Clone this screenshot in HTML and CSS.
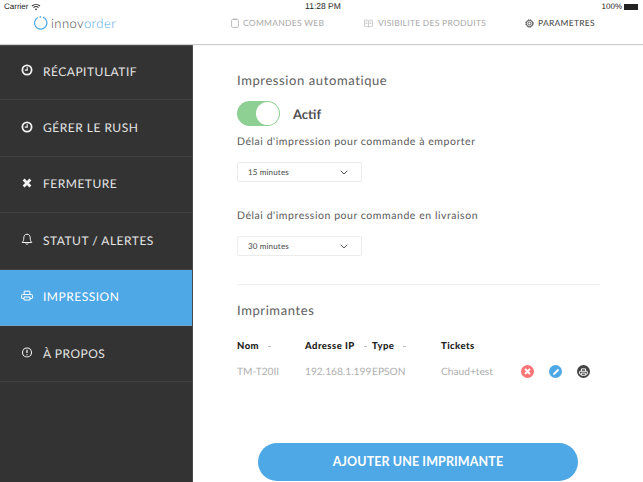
FILE: index.html
```html
<!DOCTYPE html>
<html lang="fr">
<head>
<meta charset="utf-8">
<title>Innovorder</title>
<link rel="stylesheet" href="styles.css">
</head>
<body>
<div class="app">
  <header class="header">
    <div class="status">
      <div class="status-left">Carrier
        <svg class="wifi" width="10" height="8" viewBox="0 0 10 8"><path d="M1 3a6 6 0 0 1 8 0M2.500 4.600a3.800 3.800 0 0 1 5 0" fill="none" stroke="#333" stroke-width="1.100"/><path d="M3.800 6a1.800 1.800 0 0 1 2.400 0L5 7.400z" fill="#333"/></svg>
      </div>
      <div class="status-time">11:28 PM</div>
      <div class="status-right">100%<span class="battery"></span></div>
    </div>
    <div class="topbar">
      <div class="logo">
        <svg class="logo-mark" width="15" height="16" viewBox="0 0 16 16"><path d="M5 2.200a6.600 6.600 0 1 0 5.600-.4" fill="none" stroke="#4fa8e6" stroke-width="1.300"/><circle cx="7.800" cy="1.500" r=".9" fill="#4fa8e6"/></svg>
        <span class="logo-text">innov<span class="logo-accent">order</span></span>
      </div>
      <nav class="tabs">
        <div class="tab tab-web">
          <svg width="8" height="10" viewBox="0 0 8 10"><rect x=".6" y="1.400" width="6.800" height="8" rx="1" fill="none" stroke="#bbb"/><rect x="2.200" y=".5" width="3.600" height="1.600" fill="#bbb"/></svg>
          <span>COMMANDES WEB</span></div>
        <div class="tab tab-vis">
          <svg width="9" height="9" viewBox="0 0 10 10"><path d="M5 2C4 1 2 1 .6 1.400v7C2 8 4 8 5 9c1-1 3-1 4.400-.6v-7C8 1 6 1 5 2zM5 2v7M1.800 3.400h2M1.800 5h2M6.200 3.400h2M6.200 5h2" fill="none" stroke="#bbb" stroke-width=".8"/></svg>
          <span>VISIBILITE DES PRODUITS</span></div>
        <div class="tab tab-active">
          <svg width="9" height="9" viewBox="0 0 10 10"><circle cx="5" cy="5" r="1.600" fill="none" stroke="#444" stroke-width=".9"/><circle cx="5" cy="5" r="3.500" fill="none" stroke="#444" stroke-width="1"/><circle cx="5" cy="5" r="4.200" fill="none" stroke="#444" stroke-width="1.100" stroke-dasharray="1.100 1.100"/></svg>
          <span>PARAMETRES</span></div>
      </nav>
    </div>
  </header>
  <div class="main">
    <aside class="sidebar">
      <div class="item">
        <svg class="ico" width="12" height="12" viewBox="0 0 12 12"><circle cx="6" cy="6" r="4.600" fill="none" stroke="#f2f2f2" stroke-width="1.800"/><path d="M6.200 3.200v3H3.800" fill="none" stroke="#f2f2f2" stroke-width="1.200"/></svg>
        <span>RÉCAPITULATIF</span></div>
      <div class="item">
        <svg class="ico" width="12" height="12" viewBox="0 0 12 12"><circle cx="6" cy="6" r="4.600" fill="none" stroke="#f2f2f2" stroke-width="1.800"/><path d="M6.200 3.200v3H3.800" fill="none" stroke="#f2f2f2" stroke-width="1.200"/></svg>
        <span>GÉRER LE RUSH</span></div>
      <div class="item">
        <svg class="ico" width="12" height="12" viewBox="0 0 12 12"><path d="M2.600 2.600l6.800 6.800M9.400 2.600l-6.800 6.800" fill="none" stroke="#f4f4f4" stroke-width="2.800"/></svg>
        <span>FERMETURE</span></div>
      <div class="item">
        <svg class="ico" width="12" height="13" viewBox="0 0 12 13"><path d="M6 1.200c-2 0-3.200 1.500-3.200 3.500 0 2.500-.6 3.600-1.600 4.800h9.600c-1-1.200-1.600-2.300-1.600-4.800 0-2-1.200-3.500-3.200-3.500zM4.800 10.500a1.300 1.300 0 0 0 2.400 0" fill="none" stroke="#f2f2f2"/></svg>
        <span>STATUT / ALERTES</span></div>
      <div class="item item-active">
        <svg class="ico" width="12" height="11" viewBox="0 0 12 11"><path d="M3.200 4.500V1.200h5.600v3.300M3 8.500H1.200c-.4 0-.6-.3-.6-.6V5.300c0-.5.3-.8.800-.8h9.200c.5 0 .8.300.8.800v2.600c0 .3-.2.600-.6.600H9M3 7h6v3H3z" fill="none" stroke="#fff" stroke-width="1"/></svg>
        <span>IMPRESSION</span></div>
      <div class="item">
        <svg class="ico" width="11" height="11" viewBox="0 0 11 11"><circle cx="5.500" cy="5.500" r="4.500" fill="none" stroke="#f2f2f2" stroke-width="1.100"/><path d="M5.500 2.800v3.200M5.500 7.200v1.100" stroke="#f2f2f2" stroke-width="1.300"/></svg>
        <span>À PROPOS</span></div>
    </aside>
    <main class="content">
      <h2 class="title">Impression automatique</h2>
      <div class="toggle-row">
        <div class="toggle"><div class="knob"></div></div>
        <span class="toggle-label">Actif</span>
      </div>
      <div class="label">Délai d'impression pour commande à emporter</div>
      <div class="select"><span>15 minutes</span>
        <svg width="8" height="5" viewBox="0 0 8 5"><path d="M.7.700L4 4l3.300-3.300" fill="none" stroke="#555" stroke-width="1"/></svg></div>
      <div class="label label-second">Délai d'impression pour commande en livraison</div>
      <div class="select"><span>30 minutes</span>
        <svg width="8" height="5" viewBox="0 0 8 5"><path d="M.7.700L4 4l3.300-3.300" fill="none" stroke="#555" stroke-width="1"/></svg></div>
      <hr class="rule">
      <h2 class="title title-printers">Imprimantes</h2>
      <div class="table">
        <div class="cell th">Nom<i class="sort"></i></div>
        <div class="cell th">Adresse IP<i class="sort"></i></div>
        <div class="cell th">Type<i class="sort"></i></div>
        <div class="cell th">Tickets</div>
        <div class="cell-empty"></div>
        <div class="cell td">TM-T20II</div>
        <div class="cell td">192.168.1.199</div>
        <div class="cell td">EPSON</div>
        <div class="cell td">Chaud+test</div>
        <div class="actions">
          <span class="action action-red"><svg width="7" height="7" viewBox="0 0 7 7"><path d="M1 1l5 5M6 1L1 6" stroke="#fff" stroke-width="1.800"/></svg></span>
          <span class="action action-blue"><svg width="8" height="8" viewBox="0 0 8 8"><path d="M1 7l1.800-.4L7.200 2.200 5.800.8 1.400 5.200z" fill="#fff"/></svg></span>
          <span class="action action-dark"><svg width="9" height="8" viewBox="0 0 12 11"><path d="M3.200 4.500V1.200h5.600v3.300M3 8.500H1.200c-.4 0-.6-.3-.6-.6V5.300c0-.5.3-.8.800-.8h9.200c.5 0 .8.300.8.800v2.600c0 .3-.2.600-.6.600H9M3 7h6v3H3z" fill="none" stroke="#fff" stroke-width="1.300"/></svg></span>
        </div>
      </div>
      <button class="add">AJOUTER UNE IMPRIMANTE</button>
    </main>
  </div>
</div>
</body>
</html>
```
FILE: styles.css
```css
* { box-sizing: border-box; }
html, body { margin: 0; padding: 0; }
body { font-family: Lato, "Open Sans", sans-serif; background: #fff; overflow: hidden; text-rendering: geometricPrecision; }
.app { width: 643px; height: 482px; display: flex; flex-direction: column; overflow: hidden; }

.header { height: 44px; flex: none; background: #fff; box-shadow: 0 1px 1px #ccc; position: relative; z-index: 2; }
.status { height: 13px; display: grid; grid-template-columns: 1fr auto 1fr; padding: 0 5px 0 4px; font: 8px/13px "Liberation Sans", sans-serif; color: #222; }
.status-left { display: flex; align-items: center; gap: 3px; }
.status-time { font-size: 8.500px; margin-left: 4px; }
.status-right { display: flex; justify-content: flex-end; align-items: center; gap: 2px; }
.battery { width: 14px; height: 6px; background: #222; }
.topbar { display: flex; height: 19px; padding-top: 1px; }
.logo { width: 228px; padding-left: 33px; display: flex; align-items: center; gap: 3px; }
.logo-mark { margin-top: -1px; flex: none; }
.logo-text { font-size: 13px; font-weight: 300; letter-spacing: .45px; color: #4a4a4a; }
.logo-accent { color: #4fa8e6; }
.tabs { display: flex; font-size: 8.500px; letter-spacing: .27px; color: #aaa; align-items: center; }
.tab { display: flex; align-items: center; gap: 5px; white-space: nowrap; }
.tab-web { margin-left: 3px; width: 133px; gap: 4px; }
.tab-vis { width: 161px; }
.tab-active { color: #444; gap: 4px; }

.main { flex: 1; display: flex; min-height: 0; }
.sidebar { width: 193px; flex: none; background: #333; border-right: 1px solid #4a4a4a; height: 438px; }
.item { height: 56.400px; display: flex; align-items: center; padding-left: 21px; gap: 10px; border-bottom: 1px solid #414141; color: #e4e4e4; font-size: 12px; letter-spacing: .5px; padding-bottom: 1px; }
.ico { width: 12px; flex: none; margin-top: -2px; }
.item-active { background: #4fa8e6; color: #fff; border-bottom-color: #6fa7cf; }

.content { flex: 1; padding: 28px 43px 0 44px; color: #555; }
.title { margin: 0; font-size: 13px; font-weight: 400; letter-spacing: .6px; line-height: 17px; color: #606060; }
.toggle-row { display: flex; align-items: center; margin-top: 12px; gap: 13px; }
.toggle { width: 43px; height: 25px; border-radius: 13px; background: #8ed093; padding: 1px; display: flex; justify-content: flex-end; }
.knob { width: 23px; height: 23px; border-radius: 50%; background: #fff; }
.toggle-label { font-size: 13px; font-weight: 700; color: #4f4f4f; }
.label { margin-top: 9px; font-size: 10.500px; letter-spacing: .55px; line-height: 14px; color: #5a5a5a; white-space: nowrap; }
.label-second { margin-top: 27px; }
.select { margin-top: 13px; width: 125px; height: 20px; border: 1px solid #ececec; border-radius: 2px; display: flex; align-items: center; justify-content: space-between; padding: 0 13px 0 10px; font-size: 8px; font-weight: 500; color: #555; letter-spacing: .15px; }
.rule { margin: 28px 0 0; border: 0; border-top: 1px solid #efefef; }
.title-printers { margin-top: 17px; }
.table { margin-top: 21px; display: grid; grid-template-columns: 68px 67px 69px 80px 1fr; row-gap: 12px; align-items: center; }
.cell { white-space: nowrap; }
.th { font-size: 9.500px; font-weight: 900; letter-spacing: .45px; color: #222; height: 13px; line-height: 13px; display: flex; align-items: center; }
.sort { width: 3px; height: 1px; background: #bbb; margin-left: 9px; }
.td { font-size: 10.200px; color: #b0b0b0; line-height: 14px; height: 14px; }
.actions { display: flex; gap: 15px; margin-top: -1px; }
.action { width: 13px; height: 13px; border-radius: 50%; display: flex; align-items: center; justify-content: center; }
.action-red { background: #ff7474; }
.action-blue { background: #4fa8e6; }
.action-dark { background: #444; }
.add { display: block; margin: 64px 0 0 21px; width: 320px; height: 38px; border: 0; border-radius: 19px; background: #4fa8e6; color: #fff; font: 700 12.500px Lato, sans-serif; letter-spacing: .1px; padding: 0 0 1px; }
```
